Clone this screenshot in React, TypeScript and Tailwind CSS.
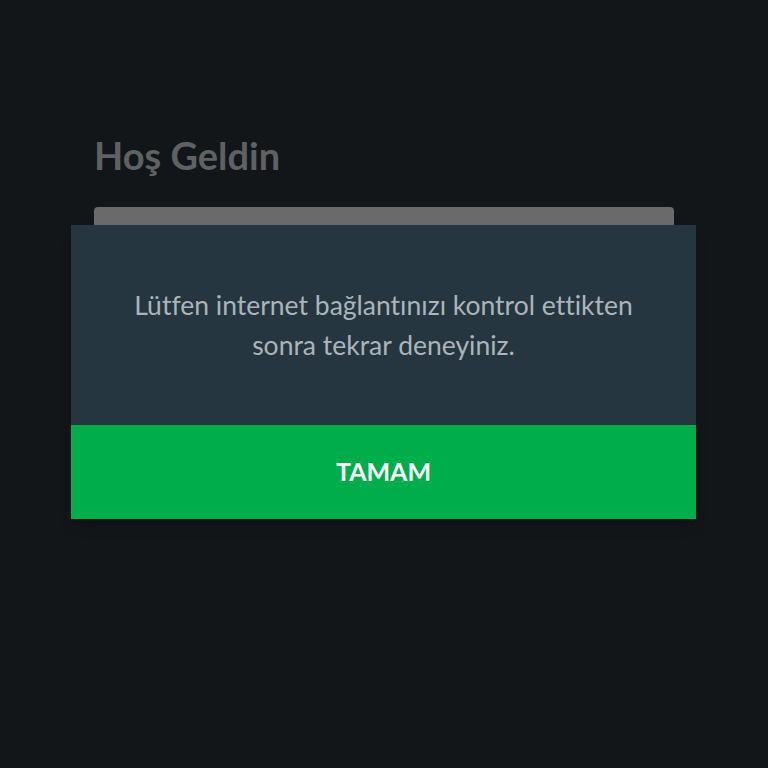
import React from "react";

export default function App() {
  return (
    <div className="relative h-[768px] w-[768px] overflow-hidden bg-[#121619] font-['Lato','Noto_Sans',sans-serif] [font-variant-ligatures:none]">
      {/* page content, dimmed behind the modal */}
      <div className="px-[94px] pt-[131px]">
        <h1 className="text-[38px] font-bold leading-[48px] text-[#5f6162]">Hoş Geldin</h1>
        <div className="mt-[28px] h-[300px] rounded-t-[4px] bg-[#6a6a6a]" />
      </div>

      {/* connection error modal */}
      <div className="absolute left-[71px] top-[225px] w-[625px] shadow-lg">
        <div className="flex h-[200px] items-center justify-center bg-[#263640] px-6">
          <p className="text-center text-[26.5px] leading-[40px] text-[#a9b5bb]">
            Lütfen internet bağlantınızı kontrol ettikten
            <br />
            sonra tekrar deneyiniz.
          </p>
        </div>
        <button className="flex h-[94px] w-full items-center justify-center bg-[#00ad4b] text-[25px] font-bold text-white">
          TAMAM
        </button>
      </div>
    </div>
  );
}
